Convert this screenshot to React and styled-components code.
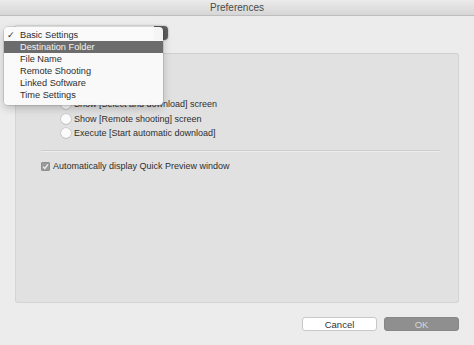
import React from 'react';
import styled, { createGlobalStyle } from 'styled-components';

const GlobalStyle = createGlobalStyle`
  html, body {
    margin: 0;
    padding: 0;
    background: #ececec;
  }
  body {
    font-family: "Liberation Sans", Arial, sans-serif;
    color: #2e2e2e;
  }
`;

const Window = styled.div`
  position: relative;
  width: 474px;
  height: 345px;
  background: #ececec;
  overflow: hidden;
  display: flex;
  flex-direction: column;
`;

const TitleBar = styled.div`
  height: 16px;
  flex: none;
  display: flex;
  align-items: center;
  justify-content: center;
  background: linear-gradient(#ebebeb, #d6d6d6);
  border-bottom: 1px solid #bdbdbd;
  font-size: 10px;
  color: #4a4a4a;
  box-sizing: border-box;
`;

const TopRow = styled.div`
  height: 37px;
  flex: none;
  display: flex;
  align-items: flex-start;
  padding: 10px 0 0 14px;
  box-sizing: border-box;
`;

const PopupButton = styled.div`
  width: 154px;
  height: 14px;
  border-radius: 4px;
  background: linear-gradient(90deg, #fafafa 0 140px, #5c5c5c 140px);
  box-shadow: 0 0 2px rgba(0, 0, 0, 0.4);
`;

const Group = styled.div`
  margin: 0 15px;
  height: 250px;
  box-sizing: border-box;
  background: #e1e1e1;
  border: 1px solid #d4d4d4;
  border-top-color: #cfcfcf;
  border-radius: 3px;
  padding: 44px 0 0 25px;
  display: flex;
  flex-direction: column;
`;

const RadioList = styled.div`
  display: flex;
  flex-direction: column;
  gap: 2.5px;
  padding-left: 20px;
`;

const Row = styled.label`
  display: flex;
  align-items: center;
  gap: 3px;
  height: 12px;
  font-size: 9px;
  line-height: 12px;
  white-space: nowrap;
`;

const Radio = styled.span`
  width: 10px;
  height: 10px;
  border-radius: 50%;
  background: #fbfbfb;
  box-shadow: 0 0 0 0.5px #b9b9b9, 0 0.5px 1px rgba(0, 0, 0, 0.2);
  flex: none;
`;

const Divider = styled.div`
  height: 1px;
  margin: 11px 18px 0 0;
  background: #cdcdcd;
  border-bottom: 1px solid #ececec;
`;

const CheckRow = styled(Row)`
  margin-top: 8px;
`;

const Checkbox = styled.span`
  width: 9px;
  height: 9px;
  border-radius: 2px;
  background: #9a9a9a;
  flex: none;
  display: flex;
  align-items: center;
  justify-content: center;
  box-shadow: inset 0 0 0 0.5px #858585;
`;

const Footer = styled.div`
  flex: 1;
  display: flex;
  justify-content: flex-end;
  align-items: center;
  gap: 7px;
  padding: 0 15px 0 0;
`;

const Button = styled.div`
  width: 75px;
  height: 14px;
  border-radius: 3px;
  box-sizing: border-box;
  display: flex;
  align-items: center;
  justify-content: center;
  font-size: 9.5px;
  background: ${p => (p.$primary ? '#8f8f8f' : '#ffffff')};
  color: ${p => (p.$primary ? '#d6d6d6' : '#333')};
  border: 1px solid ${p => (p.$primary ? '#878787' : '#c8c8c8')};
`;

const Menu = styled.div`
  position: absolute;
  left: 4px;
  top: 27px;
  width: 159px;
  padding: 2px 0 4px;
  background: rgba(250, 250, 250, 0.97);
  border-radius: 4px;
  box-shadow: 0 0 0 0.5px rgba(0, 0, 0, 0.18), 0 3px 8px rgba(0, 0, 0, 0.22);
  z-index: 2;
`;

const MenuItem = styled.div`
  height: 12px;
  display: flex;
  align-items: center;
  font-size: 9.2px;
  padding-left: 16px;
  position: relative;
  color: ${p => (p.$active ? '#f4f4f4' : '#2e2e2e')};
  background: ${p => (p.$active ? '#6c6c6c' : 'transparent')};
`;

const Check = styled.span`
  position: absolute;
  left: 3px;
  font-size: 9px;
`;

const menuItems = [
  'Basic Settings',
  'Destination Folder',
  'File Name',
  'Remote Shooting',
  'Linked Software',
  'Time Settings',
];

export default function App() {
  return (
    <>
      <GlobalStyle />
      <Window>
        <TitleBar>Preferences</TitleBar>
        <TopRow>
          <PopupButton />
        </TopRow>
        <Group>
          <RadioList>
            <Row><Radio />Show [Select and download] screen</Row>
            <Row><Radio />Show [Remote shooting] screen</Row>
            <Row><Radio />Execute [Start automatic download]</Row>
          </RadioList>
          <Divider />
          <CheckRow>
            <Checkbox>
              <svg width="7" height="7" viewBox="0 0 7 7">
                <path d="M1 3.6 L2.8 5.4 L6 1.3" fill="none" stroke="#eeeeee" strokeWidth="1.3" />
              </svg>
            </Checkbox>
            Automatically display Quick Preview window
          </CheckRow>
        </Group>
        <Footer>
          <Button>Cancel</Button>
          <Button $primary>OK</Button>
        </Footer>
        <Menu>
          {menuItems.map((item, i) => (
            <MenuItem key={item} $active={i === 1}>
              {i === 0 && <Check>✓</Check>}
              {item}
            </MenuItem>
          ))}
        </Menu>
      </Window>
    </>
  );
}
